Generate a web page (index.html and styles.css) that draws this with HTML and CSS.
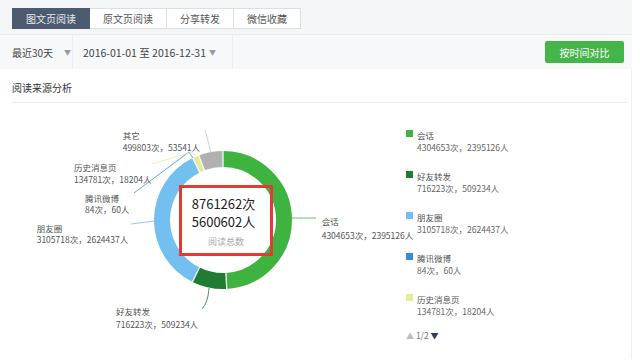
FILE: index.html
```html
<!DOCTYPE html>
<html>
  <head>
    <title>阅读来源分析</title>
    <link rel="stylesheet" href="styles.css">
  </head>
  <body>
    <div class="page">
      <div class="tabs">
        <a class="tab active">图文页阅读</a>
        <a class="tab">原文页阅读</a>
        <a class="tab">分享转发</a>
        <a class="tab">微信收藏</a>
      </div>

      <div class="filters">
        <div class="range">最近30天 <span class="caret">▼</span></div>
        <div class="dates">2016-01-01 至 2016-12-31 <span class="caret">▼</span></div>
        <div class="spacer"></div>
        <button class="compare">按时间对比</button>
      </div>

      <div class="section">
        <h2 class="sectionTitle">阅读来源分析</h2>
        <div class="chartRow">
          <div class="chart">
            <svg class="donut" width="406" height="255" viewBox="0 105 406 255">
              <g fill="none" stroke-width="16" transform="rotate(-90 223 222)">
                <circle cx="223" cy="222" r="61" pathLength="360" stroke="#3fb340" stroke-dasharray="176.88 360" stroke-dashoffset="0"/>
                <circle cx="223" cy="222" r="61" pathLength="360" stroke="#227b32" stroke-dasharray="29.43 360" stroke-dashoffset="-176.88"/>
                <circle cx="223" cy="222" r="61" pathLength="360" stroke="#72bff0" stroke-dasharray="127.61 360" stroke-dashoffset="-206.31"/>
                <circle cx="223" cy="222" r="61" pathLength="360" stroke="#3b88dd" stroke-dasharray="0.3 360" stroke-dashoffset="-333.92"/>
                <circle cx="223" cy="222" r="61" pathLength="360" stroke="#e6ec96" stroke-dasharray="5.54 360" stroke-dashoffset="-333.92"/>
                <circle cx="223" cy="222" r="61" pathLength="360" stroke="#b1b1b1" stroke-dasharray="20.54 360" stroke-dashoffset="-339.46"/>
              </g>
              <g stroke="#fff" stroke-width="1.2">
                <line x1="223" y1="170" x2="223" y2="151"/>
                <line x1="225.8" y1="273.9" x2="226.8" y2="291.9"/>
                <line x1="200" y1="268.6" x2="192" y2="284.7"/>
                <line x1="200.1" y1="175.3" x2="192.2" y2="159.1"/>
                <line x1="204.8" y1="173.3" x2="198.4" y2="156.4"/>
              </g>
              <g fill="none" stroke-width="0.8">
                <path d="M291 220 L316 220" stroke="#3fb340"/>
                <path d="M209 290 Q208 305 202 311" stroke="#227b32"/>
                <path d="M155 223 L131 226" stroke="#72bff0"/>
                <path d="M193 160 L189 154 L134 195" stroke="#3b88dd"/>
                <path d="M197 159 L192 154 L152 166" stroke="#e6ec96"/>
                <path d="M211 155 Q208 142 205 132" stroke="#c4c4c4"/>
              </g>
              <g class="labels">
                <text x="122.7" y="140.5">其它</text>
                <text x="122.7" y="152.5">499803次，53541人</text>
                <text x="74" y="172.5">历史消息页</text>
                <text x="74" y="184.5">134781次，18204人</text>
                <text x="85" y="204">腾讯微博</text>
                <text x="85" y="215">84次，60人</text>
                <text x="36.7" y="234">朋友圈</text>
                <text x="36.7" y="245">3105718次，2624437人</text>
                <text x="321.7" y="227">会话</text>
                <text x="321.7" y="241">4304653次，2395126人</text>
                <text x="116" y="316.5">好友转发</text>
                <text x="116" y="330">716223次，509234人</text>
              </g>
            </svg>
            <div class="total">
              <div class="totalNum">8761262次</div>
              <div class="totalNum">5600602人</div>
              <div class="totalLabel">阅读总数</div>
            </div>
          </div>

          <div class="legend">
            <div class="legendItem">
              <span class="swatch chat"></span>
              <div><div class="legendName">会话</div><div class="legendValue">4304653次，2395126人</div></div>
            </div>
            <div class="legendItem">
              <span class="swatch share"></span>
              <div><div class="legendName">好友转发</div><div class="legendValue">716223次，509234人</div></div>
            </div>
            <div class="legendItem">
              <span class="swatch moments"></span>
              <div><div class="legendName">朋友圈</div><div class="legendValue">3105718次，2624437人</div></div>
            </div>
            <div class="legendItem">
              <span class="swatch weibo"></span>
              <div><div class="legendName">腾讯微博</div><div class="legendValue">84次，60人</div></div>
            </div>
            <div class="legendItem">
              <span class="swatch history"></span>
              <div><div class="legendName">历史消息页</div><div class="legendValue">134781次，18204人</div></div>
            </div>
            <div class="pager"><span class="pagePrev">▲</span> 1/2 <span class="pageNext">▼</span></div>
          </div>
        </div>
      </div>
    </div>
  </body>
</html>
```

FILE: styles.css
```css
body { margin: 0; background: #fff; font-family: "Noto Sans CJK SC", "Noto Sans", sans-serif; color: #333; }

.page { width: 632px; }

.tabs { display: flex; height: 35px; box-sizing: border-box; padding: 8px 0 0 12px; background: #f4f5f7; border-bottom: 1px solid #e8eaed; }
.tab { display: block; height: 21px; box-sizing: border-box; padding: 0 13px; line-height: 19px; font-size: 10px; color: #555; background: #fff; border: 1px solid #dcdfe3; border-left: none; }
.tab:first-child { border-left: 1px solid #dcdfe3; }
.tab.active { background: #4c5b70; border-color: #4c5b70; color: #e6e9ee; }

.filters { display: flex; align-items: center; height: 34px; background: #f7f8fa; font-size: 10.5px; color: #444; }
.range { display: flex; align-items: center; height: 100%; width: 73px; box-sizing: border-box; padding-left: 12px; border-right: 1px solid #eceef1; font-size: 10px; }
.range .caret { margin-left: 11px; }
.dates { display: flex; align-items: center; height: 100%; width: 160px; box-sizing: border-box; padding-left: 10px; border-right: 1px solid #eceef1; }
.dates .caret { margin-left: 3px; }
.caret { font-size: 7px; color: #999; }
.spacer { flex: 1; }
.compare { width: 79px; height: 22px; margin-right: 8px; padding: 0; border: none; border-radius: 2px; background: #44b549; color: #fff; font-family: inherit; font-size: 10px; }

.section { background: #fff; border-right: 1px solid #f0f0f0; height: 290px; }
.sectionTitle { margin: 0 4px 0 12px; padding: 12px 0 7px; font-size: 10px; line-height: 14px; font-weight: normal; color: #333; border-bottom: 1px solid #eeeeee; }

.chartRow { display: flex; }
.chart { position: relative; width: 406px; height: 255px; }
.donut { display: block; overflow: visible; }
.labels { font-size: 8.5px; fill: #555; }

.total { position: absolute; left: 179px; top: 82px; width: 94px; height: 71px; box-sizing: border-box; border: 3px solid #e53935; padding-top: 7px; text-align: center; }
.totalNum { font-size: 13px; line-height: 18px; color: #222; padding-right: 5px; }
.totalLabel { margin-top: 5px; font-size: 9px; line-height: 12px; color: #aaa; }

.legend { padding-top: 26px; font-size: 8.5px; color: #555; }
.legendItem { display: flex; gap: 4px; margin-bottom: 17px; }
.legendName { line-height: 12px; }
.legendValue { line-height: 12px; color: #666; }
.swatch { width: 7px; height: 7px; margin-top: 1px; }
.chat { background: #3fb340; }
.share { background: #227b32; }
.moments { background: #72bff0; }
.weibo { background: #3b88dd; }
.history { background: #e6ec96; }

.pager { margin-top: -4px; line-height: 10px; color: #777; }
.pagePrev { color: #bbb; font-size: 8px; }
.pageNext { color: #2b3a55; font-size: 8px; }
```
